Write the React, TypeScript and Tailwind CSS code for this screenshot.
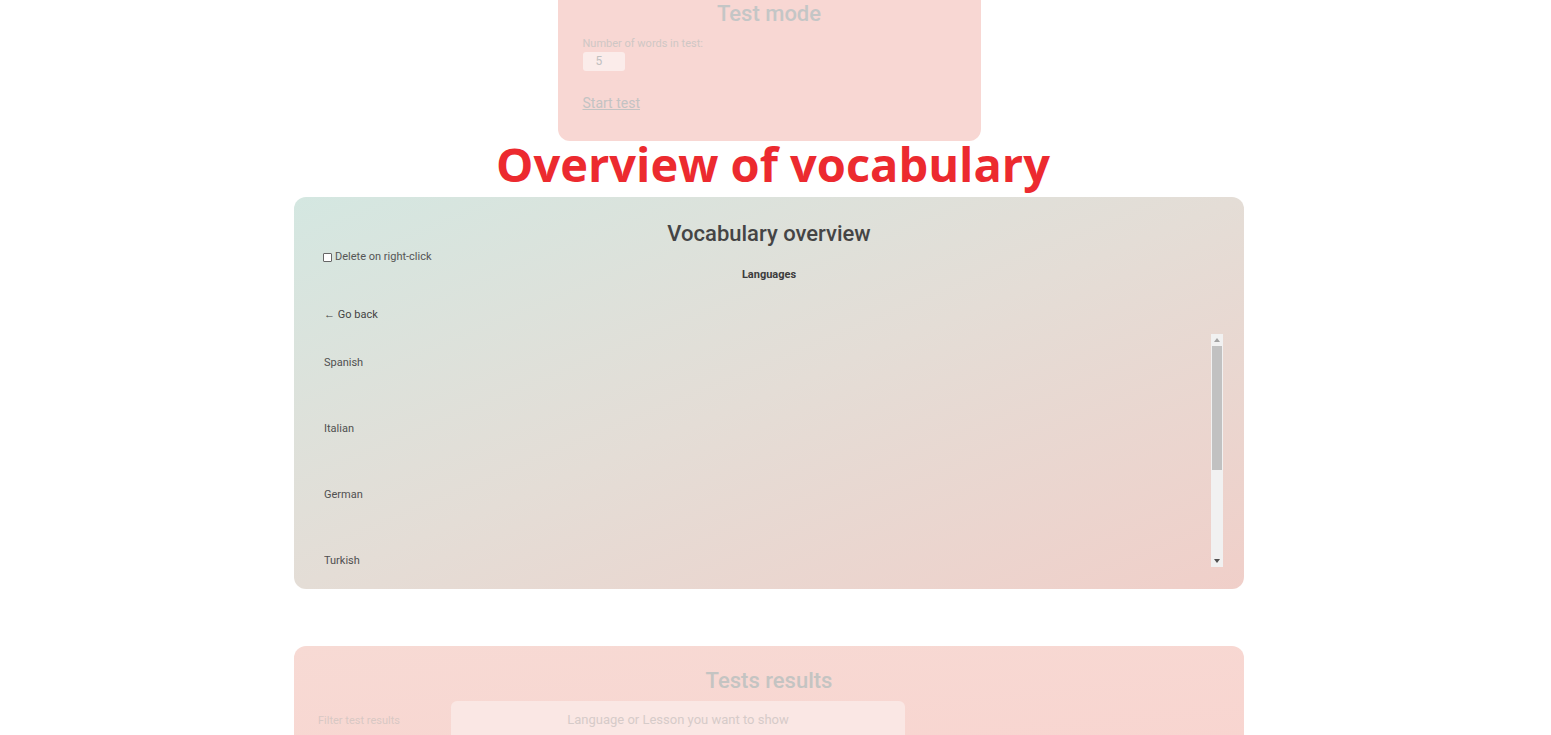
import React from 'react';

const languages = ['Spanish', 'Italian', 'German', 'Turkish'];

// ─── Faded cards (above / below the highlighted section) ──────────────────────

function TestModeCard() {
  return (
    <div className="w-[423px] bg-[#f8d7d3] rounded-b-[12px] pl-[25px] pb-[29px] flex flex-col">
      <div className="h-[28px] text-[22px] leading-[28px] font-medium text-[#c4c6c6] text-center -ml-[25px]">Test mode</div>
      <div className="mt-[8px] h-[16px] text-[11px] leading-[16px] text-[#cfc7c5]">Number of words in test:</div>
      <div className="w-[42px] h-[19px] rounded-[3px] bg-[#fbecea] text-[12px] leading-[19px] pl-[13px] text-[#c0c0c0]">5</div>
      <div className="mt-[23px] h-[18px] text-[14px] leading-[18px] text-[#c3c3c3] underline self-start">Start test</div>
    </div>
  );
}

function TestsResultsCard() {
  return (
    <div className="w-[950px] bg-gradient-to-br from-[#f7dad4] to-[#f8d5d0] rounded-t-[12px] pt-[21px] flex flex-col">
      <div className="h-[28px] text-[22px] leading-[28px] font-medium text-[#c4c4c2] text-center">Tests results</div>
      <div className="mt-[6px] flex items-start">
        <div className="w-[157px] pl-[24px] pt-[12px] text-[11px] leading-[16px] text-[#d8c8c4]">Filter test results</div>
        <div className="w-[454px] h-[40px] rounded-[6px] bg-[#fae7e4] text-[13px] leading-[38px] text-center text-[#d6cbc9]">
          Language or Lesson you want to show
        </div>
      </div>
    </div>
  );
}

// ─── Fake classic scrollbar ───────────────────────────────────────────────────

function ScrollTrack() {
  return (
    <div className="w-[12px] h-full bg-[#f1f1f1] flex flex-col">
      <div className="h-[12px] flex items-center justify-center">
        <svg width="6" height="4" viewBox="0 0 6 4"><path d="M3 0L6 4H0Z" fill="#a3a3a3" /></svg>
      </div>
      <div className="mx-[1px] h-[124px] bg-[#c1c1c1]" />
      <div className="flex-1" />
      <div className="h-[12px] flex items-center justify-center">
        <svg width="6" height="4" viewBox="0 0 6 4"><path d="M0 0H6L3 4Z" fill="#505050" /></svg>
      </div>
    </div>
  );
}

// ─── Vocabulary overview ──────────────────────────────────────────────────────

function VocabularyCard() {
  return (
    <div className="w-[950px] h-[392px] rounded-[12px] bg-gradient-to-br from-[#d4e7e1] via-[#e4ddd6] to-[#f0cfc9] pt-[23px] pl-[30px] pr-[21px] flex flex-col text-[#4a4a4a]">
      <div className="h-[28px] text-[22px] leading-[28px] font-medium text-center text-[#454545] -ml-[30px] -mr-[21px]">Vocabulary overview</div>
      <label className="mt-[1px] h-[16px] flex items-center gap-[3px] text-[11px] leading-[16px] text-[#555]">
        <input type="checkbox" className="w-[9px] h-[9px] m-0 -ml-[1px] appearance-none border border-[#666] rounded-[1px] bg-white" />
        Delete on right-click
      </label>
      <div className="mt-[2px] h-[16px] text-[11px] leading-[16px] font-bold text-center text-[#3c3c3c] -ml-[30px] -mr-[21px]">Languages</div>
      <div className="mt-[24px] h-[16px] text-[11px] leading-[16px] text-[#444]">← Go back</div>
      <div className="mt-[11px] h-[233px] flex">
        <div className="flex-1 overflow-hidden">
          {languages.map(l => (
            <div key={l} className="h-[66px] pt-[21px] text-[11px] leading-[16px] text-[#505050]">{l}</div>
          ))}
        </div>
        <ScrollTrack />
      </div>
    </div>
  );
}

export default function App() {
  return (
    <div className="w-[1538px] min-h-[735px] bg-white flex flex-col items-center overflow-hidden" style={{ fontFamily: 'Roboto, "Liberation Sans", sans-serif' }}>
      <TestModeCard />
      <h1 className="h-[56px] text-[47px] leading-[46px] font-bold text-[#ec2a2f] pl-[8px]" style={{ fontFamily: '"Open Sans", "Noto Sans", sans-serif' }}>
        Overview of vocabulary
      </h1>
      <VocabularyCard />
      <div className="h-[57px]" />
      <TestsResultsCard />
    </div>
  );
}
